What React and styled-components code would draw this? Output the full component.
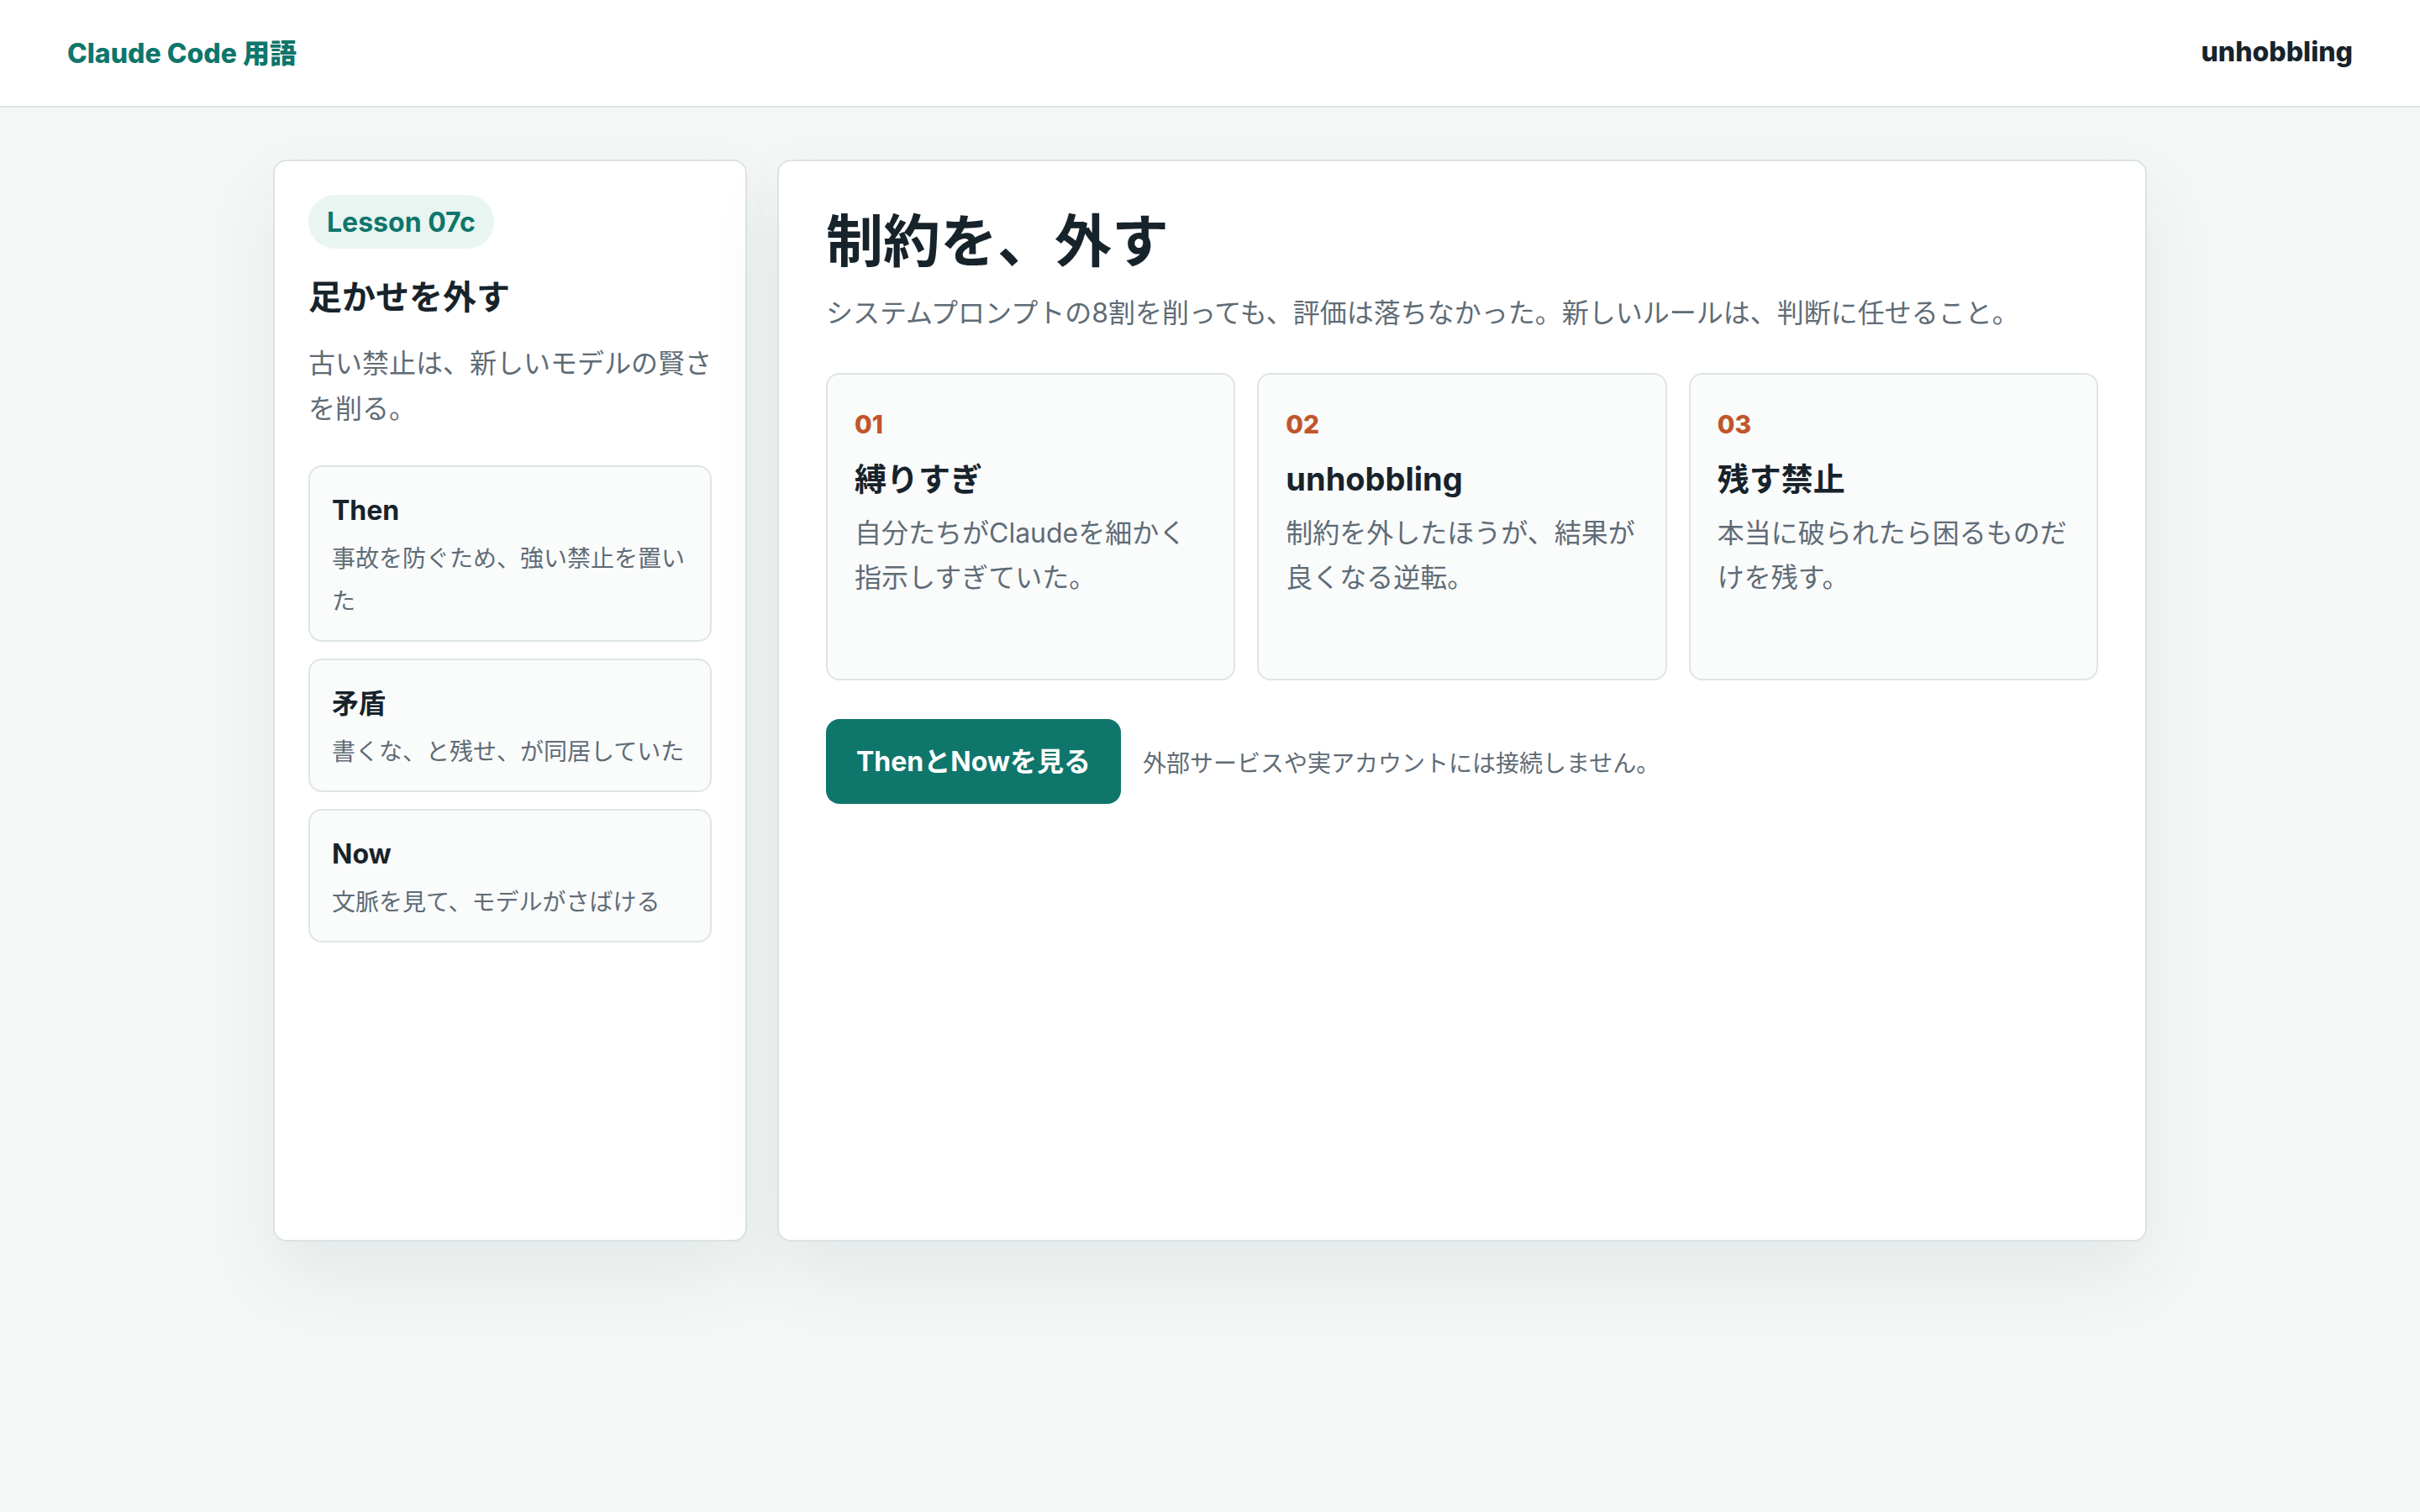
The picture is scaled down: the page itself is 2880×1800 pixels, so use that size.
import React from "react";
import styled, { createGlobalStyle } from "styled-components";

const GlobalStyle = createGlobalStyle`
  * { box-sizing: border-box; }
  html, body { margin: 0; padding: 0; }
  body {
    background: #f4f7f6;
    color: #17232b;
    font-family: Inter, "Noto Sans CJK JP", "Noto Sans", sans-serif;
    -webkit-font-smoothing: antialiased;
  }
`;

const Page = styled.div`
  min-height: 100vh;
  background: #f4f7f6;
`;

const Header = styled.header`
  height: 128px;
  background: #ffffff;
  border-bottom: 2px solid #dce4e7;
  display: flex;
  align-items: center;
  justify-content: space-between;
  padding: 0 80px 4px;
`;

const Brand = styled.div`
  font-size: 32px;
  font-weight: 800;
  color: #0f766b;
`;

const HeaderTerm = styled.div`
  font-size: 32px;
  font-weight: 800;
  color: #17232b;
`;

const Layout = styled.main`
  width: 2230px;
  margin: 0 auto;
  padding-top: 62px;
  display: grid;
  grid-template-columns: 564px 1fr;
  gap: 36px;
  align-items: stretch;
`;

const Panel = styled.section`
  background: #ffffff;
  border: 2px solid #dbe3e7;
  border-radius: 16px;
  box-shadow: 0 40px 88px rgba(20, 50, 50, 0.07);
  min-height: 1288px;
  padding: ${(p) => p.$pad};
`;

const Badge = styled.span`
  display: inline-flex;
  align-items: center;
  height: 64px;
  padding: 0 22px;
  border-radius: 999px;
  background: #e9f5f1;
  color: #0f766b;
  font-size: 32px;
  font-weight: 700;
`;

const SideTitle = styled.h2`
  margin: 26px 0 0;
  font-size: 40px;
  line-height: 64px;
  font-weight: 700;
  color: #17232b;
`;

const SideLead = styled.p`
  margin: 20px 0 0;
  font-size: 32px;
  line-height: 54px;
  color: #5f6c76;
`;

const StepList = styled.div`
  margin-top: 40px;
  display: flex;
  flex-direction: column;
  gap: 20px;
`;

const Step = styled.div`
  background: #fafbfb;
  border: 2px solid #dde5e8;
  border-radius: 16px;
  padding: 28px 26px 20px;
`;

const StepTitle = styled.div`
  font-size: 32px;
  line-height: 48px;
  font-weight: 700;
  color: #17232b;
`;

const StepText = styled.div`
  margin-top: 8px;
  font-size: 28px;
  line-height: 51px;
  color: #5f6c76;
`;

const Title = styled.h1`
  margin: 0;
  font-size: 68px;
  line-height: 78px;
  font-weight: 700;
  color: #17232b;
`;

const Lead = styled.p`
  margin: 20px 0 0;
  font-size: 32px;
  line-height: 54px;
  color: #5f6c76;
`;

const Features = styled.div`
  margin-top: 44px;
  display: grid;
  grid-template-columns: repeat(3, 1fr);
  gap: 26px;
`;

const Feature = styled.div`
  min-height: 366px;
  background: #fafbfb;
  border: 2px solid #dde5e8;
  border-radius: 16px;
  padding: 34px 32px 32px;
`;

const Num = styled.div`
  font-size: 30px;
  line-height: 50px;
  font-weight: 800;
  color: #c0562a;
`;

const FeatureTitle = styled.h3`
  margin: 14px 0 0;
  font-size: 38px;
  line-height: 52px;
  font-weight: 700;
  color: #17232b;
`;

const FeatureText = styled.p`
  margin: 12px 0 0;
  font-size: 32px;
  line-height: 53px;
  color: #5f6c76;
`;

const Actions = styled.div`
  margin-top: 46px;
  display: flex;
  align-items: center;
  gap: 26px;
`;

const Button = styled.button`
  border: 0;
  border-radius: 16px;
  background: #0f766b;
  color: #ffffff;
  font-family: inherit;
  font-size: 32px;
  font-weight: 700;
  line-height: 48px;
  padding: 27px 36px 26px;
  cursor: pointer;
`;

const Note = styled.span`
  font-size: 28px;
  color: #5f6c76;
`;

const steps = [
  { t: "Then", d: "事故を防ぐため、強い禁止を置いた" },
  { t: "矛盾", d: "書くな、と残せ、が同居していた" },
  { t: "Now", d: "文脈を見て、モデルがさばける" },
];

const features = [
  { n: "01", t: "縛りすぎ", d: "自分たちがClaudeを細かく指示しすぎていた。" },
  { n: "02", t: "unhobbling", d: "制約を外したほうが、結果が良くなる逆転。" },
  { n: "03", t: "残す禁止", d: "本当に破られたら困るものだけを残す。" },
];

export default function App() {
  return (
    <Page>
      <GlobalStyle />
      <Header>
        <Brand>Claude Code 用語</Brand>
        <HeaderTerm>unhobbling</HeaderTerm>
      </Header>
      <Layout>
        <Panel $pad="40px 40px">
          <Badge>Lesson 07c</Badge>
          <SideTitle>足かせを外す</SideTitle>
          <SideLead>古い禁止は、新しいモデルの賢さを削る。</SideLead>
          <StepList>
            {steps.map((s) => (
              <Step key={s.t}>
                <StepTitle>{s.t}</StepTitle>
                <StepText>{s.d}</StepText>
              </Step>
            ))}
          </StepList>
        </Panel>
        <Panel $pad="56px 56px">
          <Title>制約を、外す</Title>
          <Lead>システムプロンプトの8割を削っても、評価は落ちなかった。新しいルールは、判断に任せること。</Lead>
          <Features>
            {features.map((f) => (
              <Feature key={f.n}>
                <Num>{f.n}</Num>
                <FeatureTitle>{f.t}</FeatureTitle>
                <FeatureText>{f.d}</FeatureText>
              </Feature>
            ))}
          </Features>
          <Actions>
            <Button>ThenとNowを見る</Button>
            <Note>外部サービスや実アカウントには接続しません。</Note>
          </Actions>
        </Panel>
      </Layout>
    </Page>
  );
}
